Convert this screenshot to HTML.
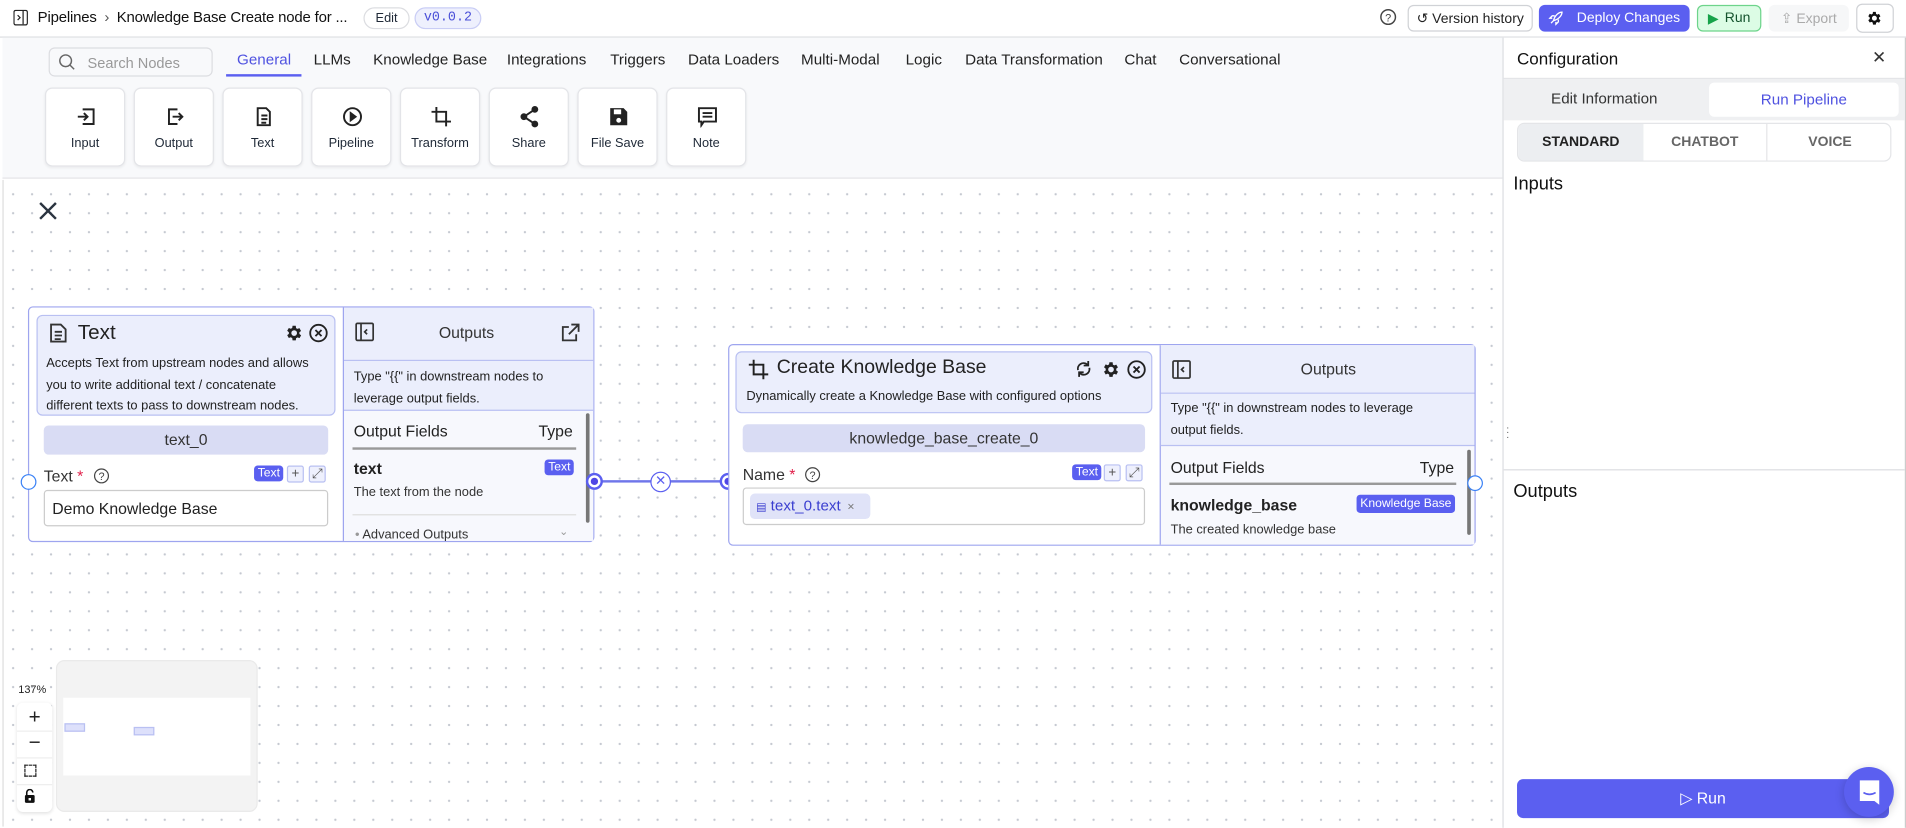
<!DOCTYPE html>
<html><head><meta charset="utf-8">
<style>
*{box-sizing:border-box;margin:0;padding:0}
html,body{width:1906px;height:828px;overflow:hidden;background:#fff;font-family:"Liberation Sans",sans-serif;color:#1f2937}
#s{position:absolute;left:0;top:0;width:1568px;height:681px;transform:scale(1.21556);transform-origin:0 0}
.a{position:absolute}
.btn{position:absolute;border-radius:5px;font-size:11.5px;display:flex;align-items:center;justify-content:center;gap:5px}
.tab{position:absolute;top:42px;font-size:12.5px;color:#222}
.nb{position:absolute;top:72px;width:66px;height:65px;background:#fff;border:1px solid #e3e4e8;border-radius:6px;box-shadow:0 1px 2px rgba(0,0,0,.06);font-size:10.5px;text-align:center}
.nb svg{position:absolute;left:24px;top:14px}
.nb span{position:absolute;left:0;right:0;top:39px}
.canvas{background-color:#fff;background-image:radial-gradient(circle,#c4c8d0 0.8px,transparent 1.1px);background-size:15.6px 15.6px;background-position:0px 4px}
.hdr{background:#ebeefc;border:1px solid #b9c0f2;border-radius:5px}
.pill{background:#d9dcf4;border-radius:4px;text-align:center;color:#333;font-size:13px}
.tag{background:#5a5ff0;color:#fff;border-radius:3px;font-size:10px;padding:1px 3px}
.sq{width:14px;height:14px;border:1px solid #b9c0f2;border-radius:2px;background:#eef0fd;font-size:11px;line-height:12px;text-align:center;color:#555}
</style></head><body><div id="s">
<!-- top bar -->
<div class="a" style="left:0;top:0;width:1568px;height:31px;border-bottom:1px solid #dcdde1;background:#fff"></div>
<svg class="a" style="left:11px;top:8px" width="12" height="13" viewBox="0 0 12 13"><rect x="0.5" y="0.5" width="11" height="12" rx="1.5" fill="none" stroke="#222"/><line x1="8" y1="1" x2="8" y2="12" stroke="#222"/><path d="M3.5 4.5l2 2-2 2" fill="none" stroke="#222"/></svg>
<div class="a" style="left:31px;top:7px;font-size:12.3px;color:#111;letter-spacing:-0.15px;white-space:nowrap">Pipelines <span style="color:#555;margin:0 3px">›</span> Knowledge Base Create node for ...</div>
<div class="a" style="left:299px;top:6px;width:38px;height:18px;border:1px solid #dcdde1;border-radius:9px;font-size:10.5px;text-align:center;line-height:16px;background:#fff">Edit</div>
<div class="a" style="left:341px;top:6px;width:55px;height:18px;border:1px solid #c9cdf5;background:#eef0fd;border-radius:9px;font-size:11px;text-align:center;line-height:16px;color:#4a4fd8;font-family:'Liberation Mono',monospace">v0.0.2</div>
<svg class="a" style="left:1135px;top:7px" width="14" height="14" viewBox="0 0 14 14"><circle cx="7" cy="7" r="6" fill="none" stroke="#444" stroke-width="1.2"/><text x="7" y="10.5" font-size="9" text-anchor="middle" fill="#444" font-family="Liberation Sans">?</text></svg>
<div class="btn" style="left:1158px;top:4px;width:103px;height:22px;border:1px solid #d0d2d6;color:#222">↺ Version history</div>
<div class="btn" style="left:1266px;top:4px;width:124px;height:22px;background:#5b5ff0;color:#fff"><svg width="12" height="12" viewBox="0 0 12 12" fill="none" stroke="#fff" stroke-width="1.1"><path d="M4 8C5 4 8 1 11 1c0 3-3 6-7 7zM4 8L2 10M3 6H1l2-2h2M6 9v2l2-2V7"/></svg>&nbsp; Deploy Changes</div>
<div class="btn" style="left:1396px;top:4px;width:53px;height:22px;border:1px solid #6dd48b;background:#dcfce5;color:#14532d"><span style="color:#16a34a">▶</span> Run</div>
<div class="btn" style="left:1455px;top:4px;width:66px;height:22px;background:#f6f7f8;color:#aaa">⇪ Export</div>
<div class="a" style="left:1527px;top:3px;width:31px;height:24px;border:1px solid #d0d2d6;border-radius:5px"></div>
<svg class="a" style="left:1535px;top:8px" width="14" height="14" viewBox="0 0 24 24"><path fill="#111" d="M19.4 13a7.5 7.5 0 000-2l2.1-1.6-2-3.5-2.5 1a7.6 7.6 0 00-1.7-1L15 3h-4l-.4 2.7a7.6 7.6 0 00-1.7 1l-2.5-1-2 3.5L6.5 11a7.5 7.5 0 000 2l-2.1 1.6 2 3.5 2.5-1a7.6 7.6 0 001.7 1L11 21h4l.4-2.7a7.6 7.6 0 001.7-1l2.5 1 2-3.5zM13 15.5a3.5 3.5 0 110-7 3.5 3.5 0 010 7z" transform="translate(-1 0)"/></svg>
<!-- toolbar -->
<div class="a" style="left:2px;top:31px;width:1234px;height:116px;background:#f8f9fb;border-bottom:1px solid #e4e5e8"></div>
<div class="a" style="left:40px;top:39px;width:135px;height:24px;border:1px solid #dcdde1;border-radius:5px;background:#f8f9fb;font-size:12px;color:#999;padding:5px 0 0 31px">Search Nodes</div>
<svg class="a" style="left:48px;top:44px" width="14" height="14" viewBox="0 0 14 14"><circle cx="6" cy="6" r="4.8" fill="none" stroke="#666" stroke-width="1.2"/><line x1="9.5" y1="9.5" x2="13" y2="13" stroke="#666" stroke-width="1.2"/></svg>
<div class="tab" style="left:195px;color:#4f52e0">General</div>
<div class="a" style="left:186px;top:61px;width:62px;height:2px;background:#5b5ff0"></div>
<div class="tab" style="left:258px">LLMs</div>
<div class="tab" style="left:307px">Knowledge Base</div>
<div class="tab" style="left:417px">Integrations</div>
<div class="tab" style="left:502px">Triggers</div>
<div class="tab" style="left:566px">Data Loaders</div>
<div class="tab" style="left:659px">Multi-Modal</div>
<div class="tab" style="left:745px">Logic</div>
<div class="tab" style="left:794px">Data Transformation</div>
<div class="tab" style="left:925px">Chat</div>
<div class="tab" style="left:970px">Conversational</div>
<div class="nb" style="left:37px"><svg width="18" height="18" viewBox="0 0 18 18" fill="none" stroke="#222" stroke-width="1.6"><path d="M6 3h9v12H6M2 9h8M7 6l3 3-3 3"/></svg><span>Input</span></div>
<div class="nb" style="left:110px"><svg width="18" height="18" viewBox="0 0 18 18" fill="none" stroke="#222" stroke-width="1.6"><path d="M11 3H4v12h7M7 9h8M12 6l3 3-3 3"/></svg><span>Output</span></div>
<div class="nb" style="left:183px"><svg width="18" height="18" viewBox="0 0 18 18" fill="none" stroke="#222" stroke-width="1.6"><path d="M4 2h7l3 3v11H4zM7 8h5M7 11h5M7 14h4"/></svg><span>Text</span></div>
<div class="nb" style="left:256px"><svg width="18" height="18" viewBox="0 0 18 18" fill="none" stroke="#222" stroke-width="1.6"><circle cx="9" cy="9" r="7"/><path d="M7.5 6v6l4-3z" fill="#222"/></svg><span>Pipeline</span></div>
<div class="nb" style="left:329px"><svg width="18" height="18" viewBox="0 0 18 18" fill="none" stroke="#222" stroke-width="1.6"><path d="M5 1v12h12M1 5h12v12"/></svg><span>Transform</span></div>
<div class="nb" style="left:402px"><svg width="18" height="18" viewBox="0 0 18 18" fill="#222" stroke="#222" stroke-width="1.6"><circle cx="13" cy="3" r="2"/><circle cx="4" cy="9" r="2"/><circle cx="13" cy="15" r="2"/><path d="M13 3L4 9l9 6" fill="none"/></svg><span>Share</span></div>
<div class="nb" style="left:475px"><svg width="18" height="18" viewBox="0 0 18 18"><path d="M2 2h11l3 3v11H2z" fill="#222"/><rect x="5" y="3" width="6" height="4" fill="#fff"/><circle cx="9" cy="12" r="2" fill="#fff"/></svg><span>File Save</span></div>
<div class="nb" style="left:548px"><svg width="18" height="18" viewBox="0 0 18 18" fill="none" stroke="#222" stroke-width="1.6"><path d="M2 2h14v11H6l-2 3V13H2zM5 6h8M5 9h8"/></svg><span>Note</span></div>
<!-- canvas -->
<div class="a canvas" style="left:2px;top:148px;width:1234px;height:532px;border-left:1px solid #ddd"></div>
<svg class="a" style="left:31px;top:165px" width="17" height="17" viewBox="0 0 17 17"><path d="M2 2l13 13M15 2L2 15" stroke="#2b3440" stroke-width="2"/></svg>
<!-- Text node -->
<div class="a" style="left:23px;top:252px;width:466px;height:194px;background:#fff;border:1.5px solid #9ea5ef;border-radius:4px"></div>
<div class="a" style="left:282px;top:253px;width:206px;height:192px;background:#f7f8fd;border-left:1px solid #9ea5ef"></div>
<div class="a hdr" style="left:30px;top:259px;width:246px;height:83px"></div>
<svg class="a" style="left:39px;top:265px" width="18" height="18" viewBox="0 0 18 18" fill="none" stroke="#333" stroke-width="1.5"><path d="M3 2h8l4 4v10H3zM6 8h6M6 11h6M6 14h5"/></svg>
<div class="a" style="left:64px;top:264px;font-size:17px;color:#222">Text</div>
<svg class="a" style="left:234px;top:266px" width="16" height="16" viewBox="0 0 24 24"><path fill="#222" d="M19.4 13a7.5 7.5 0 000-2l2.1-1.6-2-3.5-2.5 1a7.6 7.6 0 00-1.7-1L15 3h-4l-.4 2.7a7.6 7.6 0 00-1.7 1l-2.5-1-2 3.5L6.5 11a7.5 7.5 0 000 2l-2.1 1.6 2 3.5 2.5-1a7.6 7.6 0 001.7 1L11 21h4l.4-2.7a7.6 7.6 0 001.7-1l2.5 1 2-3.5zM13 15.5a3.5 3.5 0 110-7 3.5 3.5 0 010 7z" transform="translate(-1 0)"/></svg>
<svg class="a" style="left:254px;top:266px" width="16" height="16" viewBox="0 0 16 16" fill="none" stroke="#222" stroke-width="1.5"><circle cx="8" cy="8" r="6.8"/><path d="M5.5 5.5l5 5M10.5 5.5l-5 5"/></svg>
<div class="a" style="left:38px;top:291px;width:226px;font-size:10.6px;line-height:17.5px;color:#222">Accepts Text from upstream nodes and allows you to write additional text / concatenate different texts to pass to downstream nodes.</div>
<div class="a pill" style="left:36px;top:350px;width:234px;height:24px;line-height:24px">text_0</div>
<div class="a" style="left:36px;top:384px;font-size:13px;color:#333">Text <span style="color:#e11d48">*</span></div>
<svg class="a" style="left:77px;top:385px" width="13" height="13" viewBox="0 0 13 13"><circle cx="6.5" cy="6.5" r="5.7" fill="none" stroke="#444"/><text x="6.5" y="10" font-size="9" text-anchor="middle" fill="#444" font-family="Liberation Sans">?</text></svg>
<div class="a tag" style="left:209px;top:383px">Text</div>
<div class="a sq" style="left:236px;top:383px">+</div>
<div class="a sq" style="left:254px;top:383px">⤢</div>
<div class="a" style="left:36px;top:403px;width:234px;height:30px;border:1px solid #ccc;border-radius:3px;font-size:13px;padding:7px 0 0 6px;color:#222">Demo Knowledge Base</div>
<!-- Text outputs -->
<div class="a" style="left:283px;top:253px;width:205px;height:44px;background:#ebeefc;border-bottom:1px solid #b9c0f2"></div>
<svg class="a" style="left:292px;top:265px" width="16" height="16" viewBox="0 0 16 16" fill="none" stroke="#333" stroke-width="1.4"><rect x="1" y="1" width="14" height="14" rx="1"/><path d="M5 1v14M10 6l-2 2 2 2"/></svg>
<div class="a" style="left:361px;top:266px;font-size:13px;color:#333">Outputs</div>
<svg class="a" style="left:462px;top:266px" width="15" height="15" viewBox="0 0 15 15" fill="none" stroke="#333" stroke-width="1.5"><path d="M8 1h6v6M14 1L6 9M12 9v5H1V3h5"/></svg>
<div class="a" style="left:283px;top:297px;width:205px;height:41px;background:#ebeefc;border-bottom:1px solid #b9c0f2"></div>
<div class="a" style="left:291px;top:302px;width:190px;font-size:10.6px;line-height:17.5px;color:#222">Type "{{" in downstream nodes to leverage output fields.</div>
<div class="a" style="left:291px;top:347px;font-size:13px;color:#222">Output Fields</div>
<div class="a" style="left:443px;top:347px;font-size:13px;color:#222">Type</div>
<div class="a" style="left:290px;top:368px;width:184px;height:1.5px;background:#999"></div>
<div class="a" style="left:291px;top:378px;font-size:13px;font-weight:bold;color:#222">text</div>
<div class="a tag" style="left:448px;top:378px">Text</div>
<div class="a" style="left:291px;top:399px;font-size:10.6px;color:#333">The text from the node</div>
<div class="a" style="left:290px;top:423px;width:184px;height:1px;background:#ddd"></div>
<div class="a" style="left:292px;top:434px;font-size:10.6px;color:#333"><span style="color:#999">•</span> Advanced Outputs</div>
<div class="a" style="left:460px;top:432px;font-size:9px;color:#999">⌄</div>
<div class="a" style="left:482px;top:340px;width:3px;height:90px;background:#777;border-radius:2px"></div>
<!-- handles + edge -->
<div class="a" style="left:489px;top:395px;width:110px;height:1.5px;background:#6f76ea"></div>
<div class="a" style="left:17px;top:390px;width:13px;height:13px;border:1.5px solid #3b82f6;border-radius:50%;background:#fff"></div>
<div class="a" style="left:482px;top:389px;width:14px;height:14px;border:2px solid #5b5ff0;border-radius:50%;background:#fff"><div style="margin:2px;width:6px;height:6px;border-radius:50%;background:#4f46e5"></div></div>
<div class="a" style="left:535px;top:388px;width:17px;height:17px;border:1.5px solid #5b5ff0;border-radius:50%;background:#fff;color:#5b5ff0;font-size:11px;text-align:center;line-height:14px">✕</div>
<div class="a" style="left:592px;top:389px;width:14px;height:14px;border:2px solid #5b5ff0;border-radius:50%;background:#fff"><div style="margin:2px;width:6px;height:6px;border-radius:50%;background:#4f46e5"></div></div>
<!-- KB node -->
<div class="a" style="left:599px;top:283px;width:615px;height:166px;background:#fff;border:1.5px solid #9ea5ef;border-radius:4px"></div>
<div class="a" style="left:954px;top:284px;width:259px;height:164px;background:#f7f8fd;border-left:1px solid #9ea5ef"></div>
<div class="a hdr" style="left:605px;top:289px;width:343px;height:51px"></div>
<svg class="a" style="left:615px;top:295px" width="18" height="18" viewBox="0 0 18 18" fill="none" stroke="#222" stroke-width="1.6"><path d="M5 1v12h12M1 5h12v12"/></svg>
<div class="a" style="left:639px;top:294px;font-size:16px;color:#222">Create Knowledge Base</div>
<svg class="a" style="left:884px;top:296px" width="15" height="15" viewBox="0 0 16 16" fill="none" stroke="#222" stroke-width="1.6"><path d="M3 9a5 5 0 018-5l1 1M13 7a5 5 0 01-8 5l-1-1"/><path d="M12 1v4H8M4 15v-4h4"/></svg>
<svg class="a" style="left:906px;top:296px" width="16" height="16" viewBox="0 0 24 24"><path fill="#222" d="M19.4 13a7.5 7.5 0 000-2l2.1-1.6-2-3.5-2.5 1a7.6 7.6 0 00-1.7-1L15 3h-4l-.4 2.7a7.6 7.6 0 00-1.7 1l-2.5-1-2 3.5L6.5 11a7.5 7.5 0 000 2l-2.1 1.6 2 3.5 2.5-1a7.6 7.6 0 001.7 1L11 21h4l.4-2.7a7.6 7.6 0 001.7-1l2.5 1 2-3.5zM13 15.5a3.5 3.5 0 110-7 3.5 3.5 0 010 7z" transform="translate(-1 0)"/></svg>
<svg class="a" style="left:927px;top:296px" width="16" height="16" viewBox="0 0 16 16" fill="none" stroke="#222" stroke-width="1.5"><circle cx="8" cy="8" r="6.8"/><path d="M5.5 5.5l5 5M10.5 5.5l-5 5"/></svg>
<div class="a" style="left:614px;top:320px;font-size:10.6px;color:#222">Dynamically create a Knowledge Base with configured options</div>
<div class="a pill" style="left:611px;top:349px;width:331px;height:23px;line-height:23px">knowledge_base_create_0</div>
<div class="a" style="left:611px;top:383px;font-size:13px;color:#333">Name <span style="color:#e11d48">*</span></div>
<svg class="a" style="left:662px;top:384px" width="13" height="13" viewBox="0 0 13 13"><circle cx="6.5" cy="6.5" r="5.7" fill="none" stroke="#444"/><text x="6.5" y="10" font-size="9" text-anchor="middle" fill="#444" font-family="Liberation Sans">?</text></svg>
<div class="a tag" style="left:882px;top:382px">Text</div>
<div class="a sq" style="left:908px;top:382px">+</div>
<div class="a sq" style="left:926px;top:382px">⤢</div>
<div class="a" style="left:611px;top:401px;width:331px;height:31px;border:1px solid #ccc;border-radius:3px"></div>
<div class="a" style="left:617px;top:406px;width:99px;height:21px;background:#e0e3f8;border-radius:4px;font-size:12.5px;color:#3b3fd0;padding:3px 0 0 5px"><span style="font-size:9px">▤</span> text_0.text <span style="color:#777;font-size:10px;margin-left:2px">×</span></div>
<!-- KB outputs -->
<div class="a" style="left:955px;top:284px;width:258px;height:40px;background:#ebeefc;border-bottom:1px solid #b9c0f2"></div>
<svg class="a" style="left:964px;top:296px" width="16" height="16" viewBox="0 0 16 16" fill="none" stroke="#333" stroke-width="1.4"><rect x="1" y="1" width="14" height="14" rx="1"/><path d="M5 1v14M10 6l-2 2 2 2"/></svg>
<div class="a" style="left:1070px;top:296px;font-size:13px;color:#333">Outputs</div>
<div class="a" style="left:955px;top:324px;width:258px;height:43px;background:#ebeefc;border-bottom:1px solid #b9c0f2"></div>
<div class="a" style="left:963px;top:328px;width:220px;font-size:10.6px;line-height:17.5px;color:#222">Type "{{" in downstream nodes to leverage output fields.</div>
<div class="a" style="left:963px;top:377px;font-size:13px;color:#222">Output Fields</div>
<div class="a" style="left:1168px;top:377px;font-size:13px;color:#222">Type</div>
<div class="a" style="left:962px;top:397px;width:236px;height:1.5px;background:#999"></div>
<div class="a" style="left:963px;top:408px;font-size:13px;font-weight:bold;color:#222">knowledge_base</div>
<div class="a tag" style="left:1116px;top:407px;padding:2px 3px">Knowledge Base</div>
<div class="a" style="left:963px;top:430px;font-size:10.6px;color:#333">The created knowledge base</div>
<div class="a" style="left:1207px;top:370px;width:3px;height:70px;background:#777;border-radius:2px"></div>
<div class="a" style="left:1207px;top:391px;width:13px;height:13px;border:1.5px solid #3b82f6;border-radius:50%;background:#fff"></div>
<!-- minimap -->
<div class="a" style="left:46px;top:543px;width:166px;height:125px;background:#f3f3f3;border-radius:7px;border:1px solid #eaeaea"></div>
<div class="a" style="left:52px;top:574px;width:154px;height:64px;background:#fff"></div>
<div class="a" style="left:53px;top:595px;width:17px;height:7px;background:#dde0fb;border:1px solid #b9c0f2"></div>
<div class="a" style="left:110px;top:598px;width:17px;height:7px;background:#dde0fb;border:1px solid #b9c0f2"></div>
<div class="a" style="left:15px;top:562px;font-size:9px;color:#222">137%</div>
<div class="a" style="left:14px;top:578px;width:29px;height:90px;background:#fff;border-radius:5px;box-shadow:0 1px 3px rgba(0,0,0,.12)"></div>
<div class="a" style="left:14px;top:580px;width:29px;text-align:center;font-size:17px;color:#222">+</div>
<div class="a" style="left:14px;top:601px;width:29px;height:1px;background:#eee"></div>
<div class="a" style="left:14px;top:601px;width:29px;text-align:center;font-size:17px;color:#222">−</div>
<div class="a" style="left:14px;top:623px;width:29px;height:1px;background:#eee"></div>
<div class="a" style="left:20px;top:629px;width:10px;height:10px;border:1.5px dashed #222"></div>
<div class="a" style="left:14px;top:645px;width:29px;height:1px;background:#eee"></div>
<svg class="a" style="left:20px;top:649px" width="9" height="12" viewBox="0 0 9 12"><path d="M2 5V3a2.5 2.5 0 015 0" fill="none" stroke="#111" stroke-width="1.3"/><rect x="0.5" y="5" width="8" height="6.5" rx="1" fill="#111"/><rect x="3.5" y="7.5" width="2" height="2" fill="#fff"/></svg>
<!-- right panel -->
<div class="a" style="left:1236px;top:31px;width:332px;height:650px;background:#fff;border-left:1px solid #dcdde1;border-right:1px solid #ccc"></div>
<div class="a" style="left:1248px;top:40px;font-size:14px;color:#111">Configuration</div>
<div class="a" style="left:1540px;top:39px;font-size:14px;color:#333">✕</div>
<div class="a" style="left:1237px;top:64px;width:330px;height:1px;background:#e4e5e8"></div>
<div class="a" style="left:1237px;top:65px;width:330px;height:34px;background:#eff0f2"></div>
<div class="a" style="left:1276px;top:74px;font-size:12.5px;color:#333">Edit Information</div>
<div class="a" style="left:1406px;top:68px;width:156px;height:28px;background:#fff;border-radius:4px;font-size:12.5px;color:#4f52e0;text-align:center;line-height:28px">Run Pipeline</div>
<div class="a" style="left:1248px;top:101px;width:308px;height:32px;border:1px solid #e4e5e8;border-radius:6px;overflow:hidden;font-size:11.5px;font-weight:bold">
<div class="a" style="left:0;top:0;width:103px;height:30px;background:#eceef1;text-align:center;line-height:30px;color:#222">STANDARD</div>
<div class="a" style="left:103px;top:0;width:102px;height:30px;text-align:center;line-height:30px;color:#666;border-right:1px solid #e4e5e8">CHATBOT</div>
<div class="a" style="left:205px;top:0;width:103px;height:30px;text-align:center;line-height:30px;color:#666">VOICE</div></div>
<div class="a" style="left:1245px;top:143px;font-size:15px;color:#111">Inputs</div>
<div class="a" style="left:1239px;top:350px;font-size:8px;color:#555;line-height:4px">·<br>·<br>·</div>
<div class="a" style="left:1237px;top:386px;width:330px;height:1px;background:#dcdde1"></div>
<div class="a" style="left:1245px;top:396px;font-size:15px;color:#111">Outputs</div>
<div class="a" style="left:1248px;top:641px;width:306px;height:32px;background:#5b5ff0;border-radius:5px;color:#fff;font-size:13px;text-align:center;line-height:32px">▷ Run</div>
<div class="a" style="left:1517px;top:631px;width:41px;height:41px;border-radius:50%;background:#5b5ff0;box-shadow:0 2px 8px rgba(0,0,0,.2)"></div>
<svg class="a" style="left:1528px;top:641px" width="20" height="22" viewBox="0 0 20 22"><path d="M2 1h16v20l-4-3H2z" fill="#fff"/><path d="M5 11q5 3 10 0" stroke="#5b5ff0" stroke-width="1.4" fill="none"/></svg>
</div></body></html>
